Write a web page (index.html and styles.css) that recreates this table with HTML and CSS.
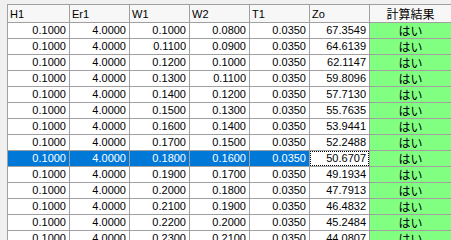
FILE: index.html
```html
<!DOCTYPE html>
<html lang="ja">
<head>
<meta charset="utf-8">
<link rel="stylesheet" href="styles.css">
</head>
<body>
<div class="wrap">
<table class="grid">
<colgroup>
<col class="c1"><col class="cn"><col class="cn"><col class="cn"><col class="cn"><col class="cn"><col class="clast">
</colgroup>
<thead>
<tr><th>H1</th><th>Er1</th><th>W1</th><th>W2</th><th>T1</th><th>Zo</th><th class="center">計算結果</th></tr>
</thead>
<tbody>
<tr><td>0.1000</td><td>4.0000</td><td>0.1000</td><td>0.0800</td><td>0.0350</td><td>67.3549</td><td class="ok">はい</td></tr>
<tr><td>0.1000</td><td>4.0000</td><td>0.1100</td><td>0.0900</td><td>0.0350</td><td>64.6139</td><td class="ok">はい</td></tr>
<tr><td>0.1000</td><td>4.0000</td><td>0.1200</td><td>0.1000</td><td>0.0350</td><td>62.1147</td><td class="ok">はい</td></tr>
<tr><td>0.1000</td><td>4.0000</td><td>0.1300</td><td>0.1100</td><td>0.0350</td><td>59.8096</td><td class="ok">はい</td></tr>
<tr><td>0.1000</td><td>4.0000</td><td>0.1400</td><td>0.1200</td><td>0.0350</td><td>57.7130</td><td class="ok">はい</td></tr>
<tr><td>0.1000</td><td>4.0000</td><td>0.1500</td><td>0.1300</td><td>0.0350</td><td>55.7635</td><td class="ok">はい</td></tr>
<tr><td>0.1000</td><td>4.0000</td><td>0.1600</td><td>0.1400</td><td>0.0350</td><td>53.9441</td><td class="ok">はい</td></tr>
<tr><td>0.1000</td><td>4.0000</td><td>0.1700</td><td>0.1500</td><td>0.0350</td><td>52.2488</td><td class="ok">はい</td></tr>
<tr class="sel"><td>0.1000</td><td>4.0000</td><td>0.1800</td><td>0.1600</td><td>0.0350</td><td class="focus"><span>50.6707</span></td><td class="ok">はい</td></tr>
<tr><td>0.1000</td><td>4.0000</td><td>0.1900</td><td>0.1700</td><td>0.0350</td><td>49.1934</td><td class="ok">はい</td></tr>
<tr><td>0.1000</td><td>4.0000</td><td>0.2000</td><td>0.1800</td><td>0.0350</td><td>47.7913</td><td class="ok">はい</td></tr>
<tr><td>0.1000</td><td>4.0000</td><td>0.2100</td><td>0.1900</td><td>0.0350</td><td>46.4832</td><td class="ok">はい</td></tr>
<tr><td>0.1000</td><td>4.0000</td><td>0.2200</td><td>0.2000</td><td>0.0350</td><td>45.2484</td><td class="ok">はい</td></tr>
<tr><td>0.1000</td><td>4.0000</td><td>0.2300</td><td>0.2100</td><td>0.0350</td><td>44.0807</td><td class="ok">はい</td></tr>
</tbody>
</table>
</div>
</body>
</html>
```
FILE: styles.css
```css
html, body {
  margin: 0;
  padding: 0;
  background: #f0f0f0;
  overflow: hidden;
}
.wrap {
  padding: 4px 0 0 7px;
}
.grid {
  border-collapse: collapse;
  table-layout: fixed;
  width: 444px;
  font-family: "Liberation Sans", "Noto Sans CJK JP", sans-serif;
  font-size: 11px;
  color: #000;
  background: #fff;
}
.c1 { width: 62px; }
.cn { width: 60px; }
.clast { width: 82px; }
.grid th {
  height: 17px;
  padding: 0 0 0 2px;
  background: #f7f7f7;
  border: 1px solid #a0a0a0;
  text-align: left;
  font-weight: normal;
  font-size: 11px;
  line-height: 16px;
}
.grid th.center {
  text-align: center;
  font-family: "Noto Sans CJK JP", sans-serif;
  font-size: 12px;
  padding: 0;
}
.grid td {
  height: 15px;
  padding: 0 3px 0 0;
  border: 1px solid #a0a0a0;
  text-align: right;
  line-height: 15px;
  white-space: nowrap;
  overflow: hidden;
}
.grid td.ok {
  background: #80ff80;
  text-align: center;
  padding: 0;
  font-family: "Noto Sans CJK JP", sans-serif;
  font-size: 12px;
}
.grid tr.sel td {
  background: #0078d7;
  color: #fff;
}
.grid tr.sel td.focus {
  background: #fff;
  color: #000;
  padding: 0;
}
.focus span {
  display: block;
  border: 1px dotted #000;
  padding-right: 2px;
  line-height: 13px;
}
.grid tr.sel td.ok {
  background: #80ff80;
  color: #000;
}
```
